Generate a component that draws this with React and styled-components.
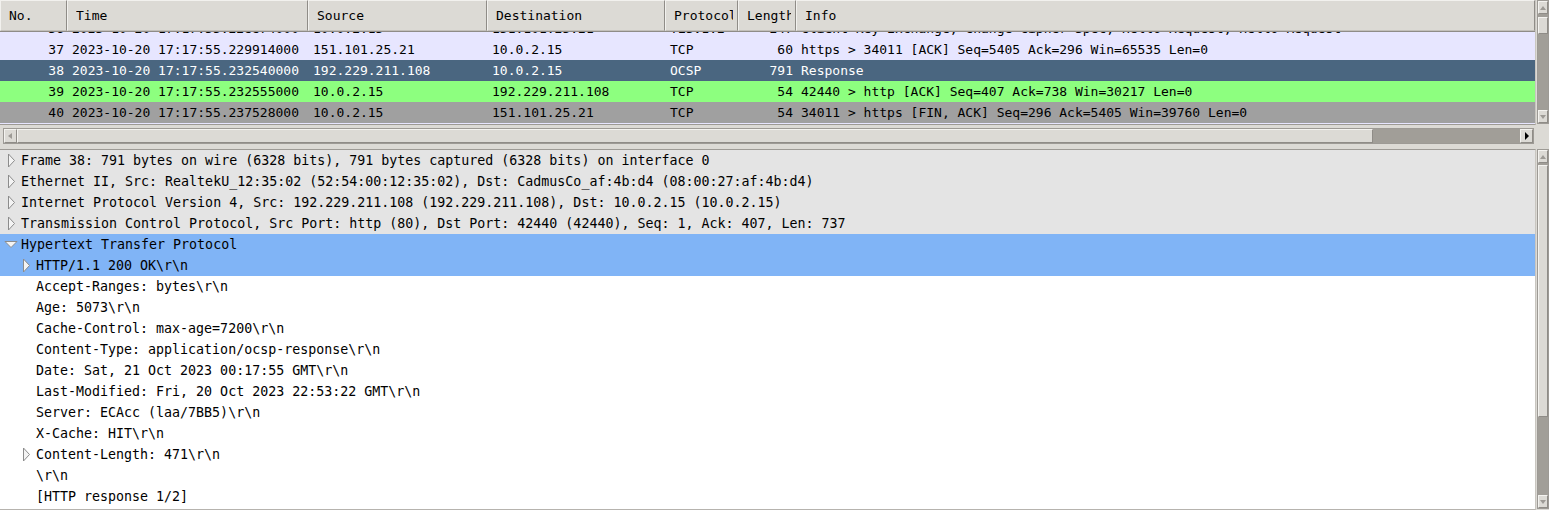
import styled, { createGlobalStyle } from "styled-components";

const GlobalStyle = createGlobalStyle`
  html, body {
    margin: 0;
    padding: 0;
    background: #dcdad5;
    font-family: "DejaVu Sans Mono", "Liberation Mono", monospace;
    overflow: hidden;
  }
`;

const columns = [
  { key: "no", title: "No.", width: 67, align: "right" },
  { key: "time", title: "Time", width: 241 },
  { key: "src", title: "Source", width: 179 },
  { key: "dst", title: "Destination", width: 178 },
  { key: "proto", title: "Protocol", width: 73 },
  { key: "len", title: "Length", width: 58, align: "right" },
  { key: "info", title: "Info", width: 0 },
];

const packets = [
  { no: 36, time: "2023-10-20 17:17:55.228874000", src: "10.0.2.15", dst: "151.101.25.21", proto: "TLSv1.2", len: 247, info: "Client Key Exchange, Change Cipher Spec, Hello Request, Hello Request", tone: "lavender" },
  { no: 37, time: "2023-10-20 17:17:55.229914000", src: "151.101.25.21", dst: "10.0.2.15", proto: "TCP", len: 60, info: "https > 34011 [ACK] Seq=5405 Ack=296 Win=65535 Len=0", tone: "lavender" },
  { no: 38, time: "2023-10-20 17:17:55.232540000", src: "192.229.211.108", dst: "10.0.2.15", proto: "OCSP", len: 791, info: "Response", tone: "selected" },
  { no: 39, time: "2023-10-20 17:17:55.232555000", src: "10.0.2.15", dst: "192.229.211.108", proto: "TCP", len: 54, info: "42440 > http [ACK] Seq=407 Ack=738 Win=30217 Len=0", tone: "green" },
  { no: 40, time: "2023-10-20 17:17:55.237528000", src: "10.0.2.15", dst: "151.101.25.21", proto: "TCP", len: 54, info: "34011 > https [FIN, ACK] Seq=296 Ack=5405 Win=39760 Len=0", tone: "gray" },
];

const details = [
  { text: "Frame 38: 791 bytes on wire (6328 bits), 791 bytes captured (6328 bits) on interface 0", level: 0, node: "closed", tone: "gray" },
  { text: "Ethernet II, Src: RealtekU_12:35:02 (52:54:00:12:35:02), Dst: CadmusCo_af:4b:d4 (08:00:27:af:4b:d4)", level: 0, node: "closed", tone: "gray" },
  { text: "Internet Protocol Version 4, Src: 192.229.211.108 (192.229.211.108), Dst: 10.0.2.15 (10.0.2.15)", level: 0, node: "closed", tone: "gray" },
  { text: "Transmission Control Protocol, Src Port: http (80), Dst Port: 42440 (42440), Seq: 1, Ack: 407, Len: 737", level: 0, node: "closed", tone: "gray" },
  { text: "Hypertext Transfer Protocol", level: 0, node: "open", tone: "blue" },
  { text: "HTTP/1.1 200 OK\\r\\n", level: 1, node: "closed", tone: "blue" },
  { text: "Accept-Ranges: bytes\\r\\n", level: 1 },
  { text: "Age: 5073\\r\\n", level: 1 },
  { text: "Cache-Control: max-age=7200\\r\\n", level: 1 },
  { text: "Content-Type: application/ocsp-response\\r\\n", level: 1 },
  { text: "Date: Sat, 21 Oct 2023 00:17:55 GMT\\r\\n", level: 1 },
  { text: "Last-Modified: Fri, 20 Oct 2023 22:53:22 GMT\\r\\n", level: 1 },
  { text: "Server: ECAcc (laa/7BB5)\\r\\n", level: 1 },
  { text: "X-Cache: HIT\\r\\n", level: 1 },
  { text: "Content-Length: 471\\r\\n", level: 1, node: "closed" },
  { text: "\\r\\n", level: 1 },
  { text: "[HTTP response 1/2]", level: 1 },
];

const rowColors = {
  lavender: { bg: "#e7e6ff", fg: "#000" },
  selected: { bg: "#4a6680", fg: "#fff" },
  green: { bg: "#8dff7f", fg: "#000" },
  gray: { bg: "#a0a0a0", fg: "#000" },
};

const detailColors = {
  gray: "#e4e4e4",
  blue: "#80b4f6",
  white: "#ffffff",
};

const Window = styled.div`
  width: 1549px;
  height: 510px;
  display: flex;
  flex-direction: column;
  background: #dcdad5;
  overflow: hidden;
`;

const TopPane = styled.div`
  display: flex;
  height: 125px;
`;

const PacketList = styled.div`
  flex: 1;
  min-width: 0;
  display: flex;
  flex-direction: column;
  border-bottom: 1px solid #9d9a95;
  border-right: 1px solid #c9c6c0;
`;

const HeaderRow = styled.div`
  display: flex;
  height: 31px;
  border-bottom: 1px solid #8f8c87;
`;

const HeaderCell = styled.div`
  flex: ${(p) => (p.$width ? `0 0 ${p.$width}px` : "1")};
  min-width: 0;
  box-sizing: border-box;
  padding: 0 4px 0 8px;
  line-height: 29px;
  font-size: 13px;
  color: #000;
  background: #dcdad5;
  border-top: 1px solid #f2f1ee;
  border-left: 1px solid #f2f1ee;
  border-right: 1px solid #8f8c87;
  border-bottom: 1px solid #c3c0ba;
`;

const HeaderLabel = styled.span`
  display: block;
  white-space: nowrap;
  overflow: hidden;
`;

const Viewport = styled.div`
  flex: 1;
  overflow: hidden;
  background: #e7e6ff;
`;

const RowsScroller = styled.div`
  margin-top: -14px;
`;

const PacketRow = styled.div`
  display: flex;
  height: 21px;
  line-height: 21px;
  font-size: 13px;
  background: ${(p) => rowColors[p.$tone].bg};
  color: ${(p) => rowColors[p.$tone].fg};
`;

const Cell = styled.div`
  flex: ${(p) => (p.$width ? `0 0 ${p.$width}px` : "1")};
  min-width: 0;
  box-sizing: border-box;
  padding: 0 3px 0 5px;
  text-align: ${(p) => p.$align || "left"};
  white-space: pre;
  overflow: hidden;
`;

const VScroll = styled.div`
  flex: 0 0 11px;
  display: flex;
  flex-direction: column;
  margin-left: 1px;
  background: #a19e98;
  border: 1px solid #9d9a95;
  box-sizing: border-box;
  height: ${(p) => p.$height}px;
`;

const ArrowButton = styled.div`
  height: 13px;
  flex: 0 0 13px;
  display: flex;
  align-items: center;
  justify-content: center;
  background: #dcdad5;
  border-top: 1px solid #f4f3f0;
  border-left: 1px solid #f4f3f0;
  border-bottom: 1px solid #8f8c87;
  border-right: 1px solid #8f8c87;
  box-sizing: border-box;
`;

const Track = styled.div`
  flex: 1;
  display: flex;
  flex-direction: ${(p) => (p.$horizontal ? "row" : "column")};
`;

const Thumb = styled.div`
  box-sizing: border-box;
  background: #dcdad5;
  border-top: 1px solid #f4f3f0;
  border-left: 1px solid #f4f3f0;
  border-bottom: 1px solid #8f8c87;
  border-right: 1px solid #8f8c87;
`;

const HScrollRow = styled.div`
  height: 16px;
  margin: 3px 15px 0 3px;
  display: flex;
  background: #a19e98;
  border: 1px solid #9d9a95;
  box-sizing: border-box;
`;

const HArrow = styled(ArrowButton)`
  width: 13px;
  height: auto;
  flex: 0 0 13px;
`;

const BottomPane = styled.div`
  display: flex;
  margin-top: 5px;
  flex: 1;
`;

const DetailTree = styled.div`
  flex: 1;
  border-top: 1px solid #9d9a95;
  border-bottom: 1px solid #b6b3ae;
  border-right: 1px solid #c9c6c0;
  background: #ffffff;
  overflow: hidden;
`;

const DetailRow = styled.div`
  display: flex;
  align-items: center;
  height: 21px;
  font-size: 13.3px;
  color: #000;
  white-space: pre;
  padding-left: ${(p) => 4 + p.$level * 15}px;
  background: ${(p) => detailColors[p.$tone || "white"]};
`;

const Expander = styled.span`
  flex: 0 0 14px;
  width: 14px;
  height: 21px;
  display: flex;
  align-items: center;
  justify-content: center;
  margin-right: 3px;
`;

const Glyph = ({ node }) => {
  if (node === "closed") {
    return (
      <svg width="9" height="15" viewBox="0 0 9 15">
        <polygon points="1.5,1 7.5,7.5 1.5,14" fill="#f4f4f4" stroke="#8c8c8c" strokeWidth="1" />
      </svg>
    );
  }
  if (node === "open") {
    return (
      <svg width="14" height="9" viewBox="0 0 14 9">
        <polygon points="1,1.5 13,1.5 7,7.5" fill="#f4f4f4" stroke="#8c8c8c" strokeWidth="1" />
      </svg>
    );
  }
  return null;
};

const Arrow = ({ dir }) => {
  const pts = {
    up: "1,5 4,1 7,5",
    down: "1,1 4,5 7,1",
    left: "5,1 1,4 5,7",
    right: "2,0 6,4 2,8",
  }[dir];
  const vertical = dir === "up" || dir === "down";
  return (
    <svg width={vertical ? 8 : 7} height={vertical ? 6 : 8} viewBox={vertical ? "0 0 8 6" : "0 0 7 8"}>
      <polygon points={pts} fill={dir === "right" ? "#000" : "#9d9a95"} />
    </svg>
  );
};

const ScrollBar = ({ height, thumbTop, thumbSize }) => (
  <VScroll $height={height}>
    <ArrowButton>
      <Arrow dir="up" />
    </ArrowButton>
    <Track>
      <Thumb style={{ marginTop: thumbTop, height: thumbSize }} />
    </Track>
    <ArrowButton>
      <Arrow dir="down" />
    </ArrowButton>
  </VScroll>
);

export default function App() {
  return (
    <Window>
      <GlobalStyle />
      <TopPane>
        <PacketList>
          <HeaderRow>
            {columns.map((c) => (
              <HeaderCell key={c.key} $width={c.width}>
                <HeaderLabel>{c.title}</HeaderLabel>
              </HeaderCell>
            ))}
          </HeaderRow>
          <Viewport>
            <RowsScroller>
              {packets.map((p) => (
                <PacketRow key={p.no} $tone={p.tone}>
                  {columns.map((c) => (
                    <Cell key={c.key} $width={c.width} $align={c.align}>
                      {p[c.key]}
                    </Cell>
                  ))}
                </PacketRow>
              ))}
            </RowsScroller>
          </Viewport>
        </PacketList>
        <ScrollBar height={124} thumbTop={3} thumbSize={17} />
      </TopPane>

      <HScrollRow>
        <HArrow>
          <Arrow dir="left" />
        </HArrow>
        <Track $horizontal>
          <Thumb style={{ width: 1356 }} />
        </Track>
        <HArrow>
          <Arrow dir="right" />
        </HArrow>
      </HScrollRow>

      <BottomPane>
        <DetailTree>
          {details.map((d, i) => (
            <DetailRow key={i} $level={d.level} $tone={d.tone}>
              <Expander>
                <Glyph node={d.node} />
              </Expander>
              {d.text}
            </DetailRow>
          ))}
        </DetailTree>
        <ScrollBar height={360} thumbTop={2} thumbSize={252} />
      </BottomPane>
    </Window>
  );
}
